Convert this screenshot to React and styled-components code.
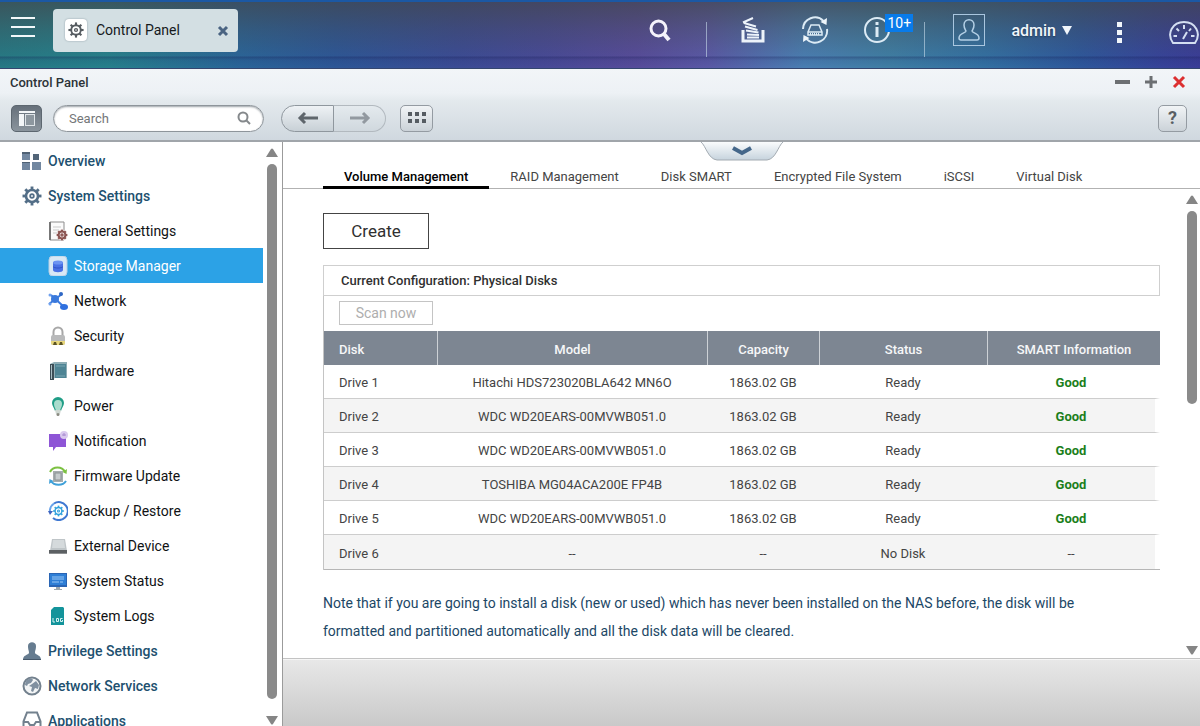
import React from "react";
import styled, { createGlobalStyle, css } from "styled-components";

const GlobalStyle = createGlobalStyle`
  *, *::before, *::after { box-sizing: border-box; }
  body {
    margin: 0;
    background: #fff;
    color: #333;
    font-family: Roboto, "Liberation Sans", sans-serif;
    font-size: 13px;
  }
  button, input { font: inherit; color: inherit; margin: 0; padding: 0; }
  button { cursor: pointer; background: none; border: 0; }
  svg { display: block; flex: none; }
`;

const Desktop = styled.div`
  display: flex;
  flex-direction: column;
  height: 100vh;
  overflow: hidden;
`;

/* ---------- Top bar ---------- */

const TopBar = styled.header`
  display: flex;
  align-items: flex-start;
  justify-content: space-between;
  flex: none;
  height: 69px;
  border-top: 2px solid #1b58a4;
  border-bottom: 1px solid #34466f;
  background:
    linear-gradient(to bottom, transparent 54px, rgba(20, 25, 80, 0.3) 55px, rgba(20, 25, 80, 0.1) 58px, transparent 66px),
    linear-gradient(to bottom, rgba(66, 70, 76, 0.7), rgba(66, 70, 76, 0.35) 40%, transparent 90%),
    linear-gradient(to right, #267a85 0%, #26818c 9%, #2a6599 20%, #2d5797 28%, #3b4c95 38%, #474a97 45%, #574c9b 53%, #5a59a6 59%, #4a7fb3 67%, #3f7fa5 74%, #3371a3 82%, #2e589c 90%, #37439a 97%, #3a3d98 100%);
`;

const TopLeft = styled.div`
  display: flex;
  gap: 18px;
  padding: 7px 0 0 11px;
`;

const MenuButton = styled.button`
  display: flex;
  flex-direction: column;
  justify-content: space-between;
  width: 24px;
  height: 20px;
  margin-top: 8px;

  span { height: 2px; background: #f2f8fa; }
`;

const AppTab = styled.div`
  display: flex;
  align-items: center;
  width: 185px;
  height: 43px;
  padding: 0 9px 2px 12px;
  border-radius: 4px;
  background: #d3dfe3;
  color: #15191c;
  font-size: 14px;
`;

const AppTabIcon = styled.span`
  display: grid;
  place-items: center;
  width: 22px;
  height: 22px;
  margin-right: 9px;
  border-radius: 4px;
  background: #fff;
  box-shadow: 0 0 2px #8b9aa2;
`;

const TabClose = styled.button`
  margin: 2px 0 0 auto;
`;

const TopRight = styled.div`
  display: flex;
  align-items: center;
  height: 56px;
  color: #f1f6fb;
`;

const TopButton = styled.button`
  position: relative;
  display: grid;
  place-items: center;
  width: ${(p) => p.$w || 62}px;
  height: 40px;
`;

const TopDivider = styled.span`
  align-self: flex-end;
  width: 1px;
  height: 35px;
  margin: 0 ${(p) => (p.$gap ? 15 : 0)}px 1px ${(p) => (p.$gap ? 0 : 16)}px;
  background: rgba(200, 220, 235, 0.6);
`;

const Badge = styled.span`
  position: absolute;
  left: 39px;
  top: 4px;
  padding: 0 2px;
  background: #087bea;
  color: #fff;
  font-size: 14px;
  line-height: 18px;
`;

const Avatar = styled.button`
  display: grid;
  place-items: center;
  width: 32px;
  height: 32px;
  margin: 0 26px 0 28px;
  border: 1px solid #a9c6df;
`;

const UserMenu = styled.button`
  display: flex;
  align-items: center;
  gap: 6px;
  font-size: 16px;
  font-weight: 500;
  text-shadow: 0 1px 2px rgba(0, 0, 0, 0.4);
`;

const MoreButton = styled.button`
  display: grid;
  gap: 3px;
  margin: 4px 47px 0 45px;

  span { width: 5px; height: 5px; background: #f1f6fb; }
`;

const Gauge = styled.button`
  margin: 6px 1px 0 0;
`;

/* ---------- Window frame ---------- */

const WindowHead = styled.div`
  flex: none;
  height: 73px;
  border-bottom: 2px solid #a0a5aa;
  background: linear-gradient(to bottom, #f2f5f8 0, #edf1f5 24px, #e3e9ed 32px, #d0d8df 100%);
`;

const TitleBar = styled.div`
  display: flex;
  align-items: center;
  justify-content: space-between;
  height: 26px;
  padding: 0 14px 0 10px;
`;

const WindowTitle = styled.h1`
  margin: 0;
  color: #2c3338;
  font-size: 13px;
  font-weight: 500;
`;

const WindowActions = styled.div`
  display: flex;
  gap: 14px;
`;

const ToolBar = styled.div`
  display: flex;
  align-items: center;
  height: 46px;
  padding: 0 13px 0 11px;
`;

const LayoutButton = styled.button`
  display: grid;
  place-items: center;
  width: 31px;
  height: 27px;
  margin-right: 11px;
  border: 1px solid #5d6770;
  border-radius: 5px;
  background: linear-gradient(#66707a, #8a949d);
`;

const SearchBox = styled.label`
  display: flex;
  align-items: center;
  width: 211px;
  height: 27px;
  margin-right: 17px;
  padding: 0 12px 0 15px;
  border: 1px solid #8e959b;
  border-radius: 14px;
  background: #fff;
  box-shadow: inset 0 1px 2px #9da3a8;
`;

const SearchInput = styled.input`
  flex: 1;
  min-width: 0;
  border: 0;
  outline: 0;
  background: none;
  &::placeholder { color: #737678; opacity: 1; }
`;

const NavPair = styled.div`
  display: flex;
  height: 27px;
  margin-right: 14px;
`;

const NavButton = styled.button`
  display: grid;
  place-items: center;
  width: ${(p) => (p.$back ? 53 : 52)}px;
  border: 1px solid ${(p) => (p.$back ? "#8f979e" : "#b2b9bf")};
  border-left-width: ${(p) => (p.$back ? 1 : 0)}px;
  border-radius: ${(p) => (p.$back ? "14px 0 0 14px" : "0 14px 14px 0")};
  background: ${(p) => (p.$back ? "linear-gradient(#eef2f5, #c8d0d6)" : "linear-gradient(#e4eaee, #d0d8de)")};
`;

const SquareButton = styled.button`
  display: grid;
  place-items: center;
  width: ${(p) => p.$w}px;
  height: 27px;
  border: 1px solid #949ba2;
  border-radius: 5px;
  background: linear-gradient(#f1f4f6, #cbd2d8);
  color: #595e63;
  font-size: 18px;
  font-weight: 700;
  line-height: 20px;
`;

const HelpSlot = styled.div`
  margin-left: auto;
`;

/* ---------- Body ---------- */

const Body = styled.div`
  display: flex;
  flex: 1;
  min-height: 0;
`;

const Sidebar = styled.nav`
  display: flex;
  flex: none;
  width: 283px;
  border-right: 1px solid #9b9b9b;
`;

const NavList = styled.ul`
  flex: 1;
  height: 100%;
  margin: 0;
  padding: 1px 0 0;
  overflow: hidden;
  list-style: none;
`;

const NavLink = styled.a`
  display: flex;
  align-items: center;
  gap: 6px;
  height: 35px;
  padding-left: ${(p) => (p.$child ? 48 : 22)}px;
  color: ${(p) => (p.$child ? "#101214" : "#21506f")};
  font-size: 14px;
  font-weight: ${(p) => (p.$child ? 400 : 500)};
  text-decoration: none;

  ${(p) => p.$active && css`
    background: #2ca2e6;
    color: #fff;
  `}
`;

const ScrollRail = styled.div`
  display: flex;
  flex-direction: column;
  align-items: center;
  flex: none;
  width: ${(p) => (p.$pane ? 17 : 19)}px;
  padding: ${(p) => (p.$pane ? "6px 0 3px" : "6px 2px 1px 0")};
`;

const Thumb = styled.div`
  flex: ${(p) => p.$grow} 1 0;
  width: 10px;
  margin: 7px 0 0;
  border-radius: 5px;
  background: #8a8a8a;
`;

const RailSpace = styled.div`
  flex: ${(p) => p.$grow || 0} 1 ${(p) => (p.$grow ? 0 : 17)}px;
`;

const Main = styled.main`
  position: relative;
  display: flex;
  flex: 1;
  flex-direction: column;
  min-width: 0;
`;

const PullTab = styled.button`
  position: absolute;
  top: 0;
  left: 50%;
  transform: translateX(-50%);
`;

const Tabs = styled.div`
  display: flex;
  align-items: flex-end;
  flex: none;
  height: 47px;
  padding-left: 40px;
  border-bottom: 1px solid #b2b2b2;
`;

const Tab = styled.button`
  height: 25px;
  margin-bottom: -1px;
  padding: 3px 21px 0;
  border-bottom: 3px solid ${(p) => (p.$active ? "#000" : "transparent")};
  color: ${(p) => (p.$active ? "#000" : "#444")};
  font-weight: ${(p) => (p.$active ? 500 : 400)};
  line-height: 19px;
`;

const Pane = styled.div`
  display: flex;
  flex: 1;
  min-height: 0;
`;

const PaneContent = styled.section`
  flex: 1;
  min-width: 0;
  overflow: hidden;
  padding: 24px 23px 0 40px;
`;

const CreateButton = styled.button`
  width: 106px;
  height: 36px;
  border: 1px solid #444;
  color: #303030;
  font-size: 17px;
`;

const ConfigTitle = styled.h2`
  margin: 16px 0 0;
  padding: 1px 17px 0;
  border: 1px solid #cfcfcf;
  color: #303030;
  font-size: 13px;
  font-weight: 500;
  line-height: 28px;
`;

const ConfigBody = styled.div`
  border-left: 1px solid #c4c4c4;
`;

const ScanRow = styled.div`
  display: flex;
  padding: 5px 0 6px 15px;
`;

const ScanButton = styled.button`
  width: 94px;
  height: 24px;
  border: 1px solid #c4c4c4;
  color: #aeaeae;
  font-size: 14px;
`;

const DiskTable = styled.table`
  width: 100%;
  table-layout: fixed;
  border-spacing: 0;
  border-bottom: 1px solid #b6b6b6;
  text-align: center;

  th {
    height: 34px;
    padding: 2px 0 0;
    border-left: 1px solid #cdd1d6;
    background: #7d8692;
    color: #f6f7f8;
    font-weight: 500;
  }
  td {
    height: 34px;
    padding: 2px 0 0;
    border-bottom: 1px solid #cdcdcd;
    color: #444;
  }
  th:first-child, td:first-child {
    padding-left: 15px;
    border-left: 0;
    text-align: left;
  }
  tbody tr:nth-child(even) td { background: #f4f4f4; }
  td:last-child { border-right: 5px solid #fff; }
  tbody tr:last-child td { border-bottom: 0; }
`;

const Good = styled.strong`
  color: #1b7f1b;
  font-weight: 700;
`;

const Note = styled.p`
  margin: 19px 0 0;
  color: #1c4766;
  font-size: 14px;
  line-height: 28px;
  max-width: 780px;
`;

const Footer = styled.footer`
  flex: none;
  height: 68px;
  border-top: 1px solid #c3c3c3;
  background: linear-gradient(#e8e8e8, #c9c9c9);
  box-shadow: inset 0 1px 0 #f6f6f6;
`;

/* ---------- Icons ---------- */

const Svg = ({ s = 20, children, ...rest }) => (
  <svg width={s} height={s} viewBox="0 0 20 20" fill="none" aria-hidden="true" {...rest}>
    {children}
  </svg>
);

const teeth = [0, 45, 90, 135, 180, 225, 270, 315];

const GearShape = ({ cx = 10, cy = 10, r = 6, w = 2, color }) => (
  <g stroke={color} fill="none" strokeWidth={w}>
    <circle cx={cx} cy={cy} r={r} />
    {teeth.map((a) => (
      <path key={a} d={`M${cx} ${cy - r}v${-r * 0.58}`} strokeWidth={w * 1.1} transform={`rotate(${a} ${cx} ${cy})`} />
    ))}
    <circle cx={cx} cy={cy} r={r * 0.3} strokeWidth={w * 0.7} />
  </g>
);

const icons = {
  overview: (
    <Svg>
      <path d="M0 1h8v8H0zM0 11h8v8H0zM10 11h9v8h-9z" fill="#7287a0" />
      <path d="M11 3h6v6h-6z" fill="#526578" />
      <path d="M0 1h8v2H0zM0 11h8v1H0z" fill="#4f6174" />
    </Svg>
  ),
  gear: <Svg><GearShape color="#536e87" r={6} w={2.6} /></Svg>,
  general: (
    <Svg>
      <path d="M2 1h14v18H2z" fill="#fafafa" stroke="#8c8c8c" />
      <path d="M2 1v18" stroke="#777" strokeWidth="2" />
      <path d="M5 6h8M5 9h6M5 12h4" stroke="#c9c9c9" />
      <circle cx="14" cy="14" r="5.4" fill="#f6eeee" />
      <GearShape cx={14} cy={14} r={3.4} w={2} color="#8b5552" />
    </Svg>
  ),
  storage: (
    <Svg>
      <rect x="1" y="0" width="18" height="20" rx="4" fill="#d9e8f5" stroke="#b7cfe4" />
      <path d="M5 6v8c0 3 10 3 10 0V6z" fill="#4a70e4" />
      <ellipse cx="10" cy="6.500" rx="5" ry="2" fill="#6c93f2" />
      <path d="M5 10.500c1 2 9 2 10 0" stroke="#2f52c6" />
    </Svg>
  ),
  network: (
    <Svg>
      <path d="M1 13 14 3M3 4l12 11" stroke="#3b7be0" strokeWidth="2" />
      <circle cx="7" cy="8" r="4" fill="#3a79dc" />
      <circle cx="13" cy="3" r="2" fill="#2f67c4" />
      <circle cx="2" cy="4" r="1.500" fill="#6fa1ee" />
      <circle cx="2" cy="13" r="1.500" fill="#6fa1ee" />
      <ellipse cx="16" cy="16" rx="4" ry="3" fill="#2f70df" />
    </Svg>
  ),
  security: (
    <Svg>
      <path d="M5.500 10V6a4.500 4.500 0 0 1 9 0v4" stroke="#a8a8a8" strokeWidth="2" />
      <rect x="3" y="9" width="14" height="10" rx="2" fill="#b9babb" />
      <path d="M3 15h14v2a2 2 0 0 1-2 2H5a2 2 0 0 1-2-2z" fill="#e8d77c" />
      <path d="m5 19 1-3h2l1 3zM11 19l1-3h2l1 3z" fill="#5b5324" />
    </Svg>
  ),
  hardware: (
    <Svg>
      <path d="m2 3 4-2h13v16H7l-5 2z" fill="#8faeb6" />
      <path d="M2 3h4v16H2z" fill="#3c4d56" />
      <path d="M3 4h1v14H3z" fill="#a9bdc3" />
      <path d="M7 3h11v14H7z" fill="#4e8494" />
      <path d="M8 5h9M8 15h9" stroke="#7aa6b2" />
    </Svg>
  ),
  power: (
    <Svg>
      <path d="M4 7a6 6 0 1 1 12 0c0 3-2.500 5-3 8H7c-.5-3-3-5-3-8z" fill="#1f9d86" />
      <path d="M6 8a4 4 0 1 1 8 0c0 3-1.500 4-2 7H8c-.5-3-2-4-2-7z" fill="#a9dccd" />
      <path d="M7 14h6l-1 4H8z" fill="#cfd8d2" />
      <circle cx="10" cy="18.500" r="1.500" fill="#8a8a80" />
    </Svg>
  ),
  notification: (
    <Svg>
      <path d="M1 3h17v13H8l-3 4v-4H1z" fill="#8e55d6" />
      <circle cx="16" cy="4" r="4" fill="#d9c9ee" />
      <path d="M16 2v3M14 4h4" stroke="#a88bd0" />
    </Svg>
  ),
  firmware: (
    <Svg>
      <path d="M2 6c3-6 12-6 15 0" stroke="#7cc142" strokeWidth="2" />
      <path d="m19 3-.5 5-4-2z" fill="#7cc142" />
      <path d="M18 15c-3 5-12 5-15 0" stroke="#3fa0d8" strokeWidth="2" />
      <path d="m1 18 .5-5 4 2z" fill="#3fa0d8" />
      <path d="M5 5h10v11H5z" fill="#a6adaf" />
      <path d="M7 7h6v7H7z" fill="#c5cbcd" stroke="#8c9395" />
    </Svg>
  ),
  backup: (
    <Svg>
      <path d="M6 2.500A9 9 0 1 1 5 17" stroke="#3f78d2" strokeWidth="2" />
      <path d="M6 2.500A9 9 0 0 0 2 11" stroke="#69a4ea" strokeWidth="2" />
      <path d="M0 10h5l-3 4z" fill="#3f64c0" />
      <GearShape cx={10.5} cy={10} r={3.4} w={1.5} color="#35a3dd" />
    </Svg>
  ),
  external: (
    <Svg>
      <path d="M4 3h13l2 12H2z" fill="#bfc5c8" />
      <path d="M5 4h11l1 8H4z" fill="#d5dadc" />
      <path d="M1 14h18v4H1z" fill="#5c6063" />
      <path d="M1 17h18v1H1z" fill="#8c8f91" />
    </Svg>
  ),
  status: (
    <Svg>
      <path d="M1 2h18v14H1z" fill="#2a65b4" />
      <path d="M2 3h16v11H2z" fill="#2f7fd6" />
      <path d="M4 6h12M4 8h12M4 11h7M12 11h3" stroke="#9cc9f5" />
      <path d="M8 16h4v2h2v1H6v-1h2z" fill="#9fa8ae" />
    </Svg>
  ),
  logs: (
    <Svg>
      <path d="M6 1h9l1 1v17H3V4z" fill="#13949b" />
      <path d="M5 12v4h2M8.500 12.500h2v3h-2zM14.500 12.500h-2v3h2v-1.500" stroke="#d7f2f3" />
    </Svg>
  ),
  person: (
    <Svg>
      <path d="M6 5c0-5 8-5 8 0 0 4-1 4-1 7 1 2 6 2 6 7H1c0-5 5-5 6-7 0-3-1-3-1-7z" fill="#667c90" />
      <path d="M1 18h18v1H1z" fill="#46586a" />
    </Svg>
  ),
  globe: (
    <Svg>
      <circle cx="10" cy="10" r="8.500" fill="#f3f5f6" stroke="#73818e" strokeWidth="2" />
      <path d="M5 4c3-2 5-2 6 0l-2 3-3 1-1 2-2-1c0-2 1-4 2-5zM10 8l4-3 3 4-1 4-3-1-2 4-2-1 1-4-3-1z" fill="#8090a0" />
    </Svg>
  ),
  apps: (
    <Svg>
      <path d="M5 1.500h10l3.500 9v8h-17v-8z" stroke="#73818e" strokeWidth="2" />
      <path d="M2 11h4l2 3h4l2-3h4" stroke="#73818e" strokeWidth="2" />
    </Svg>
  ),
};

const Arrow = ({ down }) => (
  <svg width="12" height="9" viewBox="0 0 12 9" aria-hidden="true">
    <path d={down ? "M0 0h12L7 8q-1 1-2 0z" : "M0 9h12L7 1q-1-1-2 0z"} fill="#858585" />
  </svg>
);

/* ---------- Data ---------- */

const navItems = [
  ["Overview", "overview"],
  ["System Settings", "gear"],
  ["General Settings", "general", true],
  ["Storage Manager", "storage", true],
  ["Network", "network", true],
  ["Security", "security", true],
  ["Hardware", "hardware", true],
  ["Power", "power", true],
  ["Notification", "notification", true],
  ["Firmware Update", "firmware", true],
  ["Backup / Restore", "backup", true],
  ["External Device", "external", true],
  ["System Status", "status", true],
  ["System Logs", "logs", true],
  ["Privilege Settings", "person"],
  ["Network Services", "globe"],
  ["Applications", "apps"],
];

const tabs = ["Volume Management", "RAID Management", "Disk SMART", "Encrypted File System", "iSCSI", "Virtual Disk"];

const disks = [
  ["Drive 1", "Hitachi HDS723020BLA642 MN6O", "1863.02 GB", "Ready", "Good"],
  ["Drive 2", "WDC WD20EARS-00MVWB051.0", "1863.02 GB", "Ready", "Good"],
  ["Drive 3", "WDC WD20EARS-00MVWB051.0", "1863.02 GB", "Ready", "Good"],
  ["Drive 4", "TOSHIBA MG04ACA200E FP4B", "1863.02 GB", "Ready", "Good"],
  ["Drive 5", "WDC WD20EARS-00MVWB051.0", "1863.02 GB", "Ready", "Good"],
  ["Drive 6", "--", "--", "No Disk", "--"],
];

/* ---------- Sections ---------- */

function Header() {
  return (
    <TopBar>
      <TopLeft>
        <MenuButton aria-label="Main menu"><span /><span /><span /></MenuButton>
        <AppTab>
          <AppTabIcon><Svg s={16}><GearShape color="#555b60" r={6} w={2.4} /></Svg></AppTabIcon>
          Control Panel
          <TabClose aria-label="Close Control Panel">
            <svg width="12" height="12" viewBox="0 0 12 12"><path d="m2 2 8 8M10 2l-8 8" stroke="#4a6482" strokeWidth="3" /></svg>
          </TabClose>
        </AppTab>
      </TopLeft>
      <TopRight>
        <TopButton $w={92} aria-label="Search">
          <svg width="22" height="23" viewBox="0 0 22 23" fill="none" stroke="#f5f3fb">
            <circle cx="9.500" cy="9.500" r="7.500" strokeWidth="3" /><path d="m15 15 5 6" strokeWidth="4" />
          </svg>
        </TopButton>
        <TopDivider $gap />
        <TopButton aria-label="Background tasks">
          <svg width="24" height="26" viewBox="0 0 24 26" fill="none" stroke="#edf3fa">
            <path d="M2 13v11h20V13" strokeWidth="3" />
            <path d="M6 20.500h12M6 17.500l12 .5M5 13.500l12.500 2M4 9.500l12.500 3.500M3 6l12 3.500M2 5.500 12 1" strokeWidth="2" />
          </svg>
        </TopButton>
        <TopButton aria-label="External devices">
          <svg width="28" height="28" viewBox="0 0 28 28" fill="none" stroke="#dcebf5" strokeWidth="2">
            <path d="M2 13A12 12 0 0 1 22.500 5M26 13A12 12 0 0 1 5.500 23" />
            <path d="m26 2-.5 7-6-3zM2 26l.5-7 6 3z" fill="#edf5fa" stroke="none" />
            <path d="M10 9h8l3 7v3H7v-3zM7 16h14" strokeWidth="1.500" /><path d="M9 18h10" strokeDasharray="1 1" />
          </svg>
        </TopButton>
        <TopButton aria-label="Notifications">
          <svg width="28" height="28" viewBox="0 0 28 28" fill="none" stroke="#dcebf5" strokeWidth="2">
            <circle cx="14" cy="14" r="12" /><path d="M14 11v10M14 6v3" strokeWidth="3" />
          </svg>
          <Badge>10+</Badge>
        </TopButton>
        <TopDivider />
        <Avatar aria-label="User profile">
          <svg width="24" height="24" viewBox="0 0 24 24" fill="none" stroke="#b4d0e6" strokeWidth="1.500">
            <path d="M7 7c0-7 10-7 10 0 0 3-1 4-2 6 0 2 7 2 7 7 0 2-1 2-2 2H4c-1 0-2 0-2-2 0-5 7-5 7-7-1-2-2-3-2-6z" />
          </svg>
        </Avatar>
        <UserMenu>
          admin
          <svg width="10" height="9" viewBox="0 0 10 9" aria-hidden="true"><path d="M0 0h10L5 9z" fill="#f1f6fb" /></svg>
        </UserMenu>
        <MoreButton aria-label="More"><span /><span /><span /></MoreButton>
        <Gauge aria-label="Dashboard">
          <svg width="30" height="24" viewBox="0 0 30 24" fill="none" stroke="#d4dff2" strokeWidth="2">
            <path d="M4 22C-3 12 4 1 15 1s18 11 11 21z" />
            <path d="M4.500 15H8M22 15h3.500M7.500 7.500 10 10M15 4v4M22 7.500 20 10M14 18l4-7" />
          </svg>
        </Gauge>
      </TopRight>
    </TopBar>
  );
}

function WindowChrome() {
  return (
    <WindowHead>
      <TitleBar>
        <WindowTitle>Control Panel</WindowTitle>
        <WindowActions>
          <button aria-label="Minimize"><svg width="15" height="14" viewBox="0 0 15 14"><path d="M0 7h15" stroke="#6c6f72" strokeWidth="4" /></svg></button>
          <button aria-label="Maximize"><svg width="14" height="14" viewBox="0 0 14 14"><path d="M1 7h12M7 1v12" stroke="#6c6f72" strokeWidth="3" /></svg></button>
          <button aria-label="Close"><svg width="14" height="14" viewBox="0 0 14 14"><path d="m2 2 10 10M12 2 2 12" stroke="#dc2f30" strokeWidth="3" /></svg></button>
        </WindowActions>
      </TitleBar>
      <ToolBar>
        <LayoutButton aria-label="Toggle sidebar">
          <svg width="16" height="15" viewBox="0 0 16 15"><path d="M0 0h16v2H0zM0 3h5v12H0z" fill="#f3f6f8" /><path d="M6 3h10v12H6z" fill="#dfe4e8" /><path d="M7 4h8v10H7z" fill="#8d979f" /></svg>
        </LayoutButton>
        <SearchBox>
          <SearchInput type="text" placeholder="Search" aria-label="Search settings" />
          <svg width="14" height="14" viewBox="0 0 14 14" fill="none" stroke="#85898c" strokeWidth="2"><circle cx="6" cy="6" r="4.500" /><path d="m9 9 4 4" /></svg>
        </SearchBox>
        <NavPair>
          <NavButton $back aria-label="Back">
            <svg width="22" height="14" viewBox="0 0 22 14" fill="none" stroke="#5f666c" strokeWidth="3"><path d="M21 7H3M8 2 3 7l5 5" /></svg>
          </NavButton>
          <NavButton aria-label="Forward">
            <svg width="22" height="14" viewBox="0 0 22 14" fill="none" stroke="#9299a0" strokeWidth="3"><path d="M1 7h18M14 2l5 5-5 5" /></svg>
          </NavButton>
        </NavPair>
        <SquareButton $w={33} aria-label="All settings">
          <svg width="18" height="12" viewBox="0 0 18 12" fill="#565c62"><path d="M0 0h4v4H0zM7 0h4v4H7zM14 0h4v4h-4zM0 7h4v4H0zM7 7h4v4H7zM14 7h4v4h-4z" /></svg>
        </SquareButton>
        <HelpSlot><SquareButton $w={29} aria-label="Help">?</SquareButton></HelpSlot>
      </ToolBar>
    </WindowHead>
  );
}

function SideNav() {
  return (
    <Sidebar aria-label="Settings">
      <NavList>
        {navItems.map(([label, icon, child]) => (
          <li key={label}>
            <NavLink href="#" $child={child} $active={label === "Storage Manager"}>
              {icons[icon]}
              {label}
            </NavLink>
          </li>
        ))}
      </NavList>
      <ScrollRail>
        <Arrow />
        <Thumb $grow={1} />
        <RailSpace />
        <Arrow down />
      </ScrollRail>
    </Sidebar>
  );
}

function Disks() {
  return (
    <DiskTable>
      <colgroup>
        <col width="113" />
        <col />
        <col width="112" />
        <col width="168" />
        <col width="173" />
      </colgroup>
      <thead>
        <tr>
          <th>Disk</th><th>Model</th><th>Capacity</th><th>Status</th><th>SMART Information</th>
        </tr>
      </thead>
      <tbody>
        {disks.map((row) => (
          <tr key={row[0]}>
            {row.map((cell, i) => (
              <td key={i}>{cell === "Good" ? <Good>Good</Good> : cell}</td>
            ))}
          </tr>
        ))}
      </tbody>
    </DiskTable>
  );
}

export default function App() {
  return (
    <Desktop>
      <GlobalStyle />
      <Header />
      <WindowChrome />
      <Body>
        <SideNav />
        <Main>
          <Tabs role="tablist">
            {tabs.map((t, i) => (
              <Tab key={t} role="tab" aria-selected={i === 0} $active={i === 0}>{t}</Tab>
            ))}
          </Tabs>
          <PullTab aria-label="Show header">
            <svg width="84" height="19" viewBox="0 0 84 19" fill="none">
              <defs>
                <linearGradient id="pull" x1="0" y1="0" x2="0" y2="1">
                  <stop stopColor="#fafcfd" /><stop offset="1" stopColor="#c6d3dd" />
                </linearGradient>
              </defs>
              <path d="M1 0c5 4 7 17 16 18h50c9-1 11-14 16-18z" fill="url(#pull)" />
              <path d="M1 0c5 4 7 17 16 18h50c9-1 11-14 16-18" stroke="#a3abb2" />
              <path d="m33 6 9 5 9-5" stroke="#44678a" strokeWidth="4" />
            </svg>
          </PullTab>
          <Pane>
            <PaneContent>
              <CreateButton>Create</CreateButton>
              <ConfigTitle>Current Configuration: Physical Disks</ConfigTitle>
              <ConfigBody>
                <ScanRow><ScanButton>Scan now</ScanButton></ScanRow>
                <Disks />
              </ConfigBody>
              <Note>
                Note that if you are going to install a disk (new or used) which has never been installed on the NAS before, the disk will be formatted and partitioned automatically and all the disk data will be cleared.
              </Note>
            </PaneContent>
            <ScrollRail $pane>
              <Arrow />
              <Thumb $grow={4} />
              <RailSpace $grow={5} />
              <Arrow down />
            </ScrollRail>
          </Pane>
          <Footer />
        </Main>
      </Body>
    </Desktop>
  );
}
